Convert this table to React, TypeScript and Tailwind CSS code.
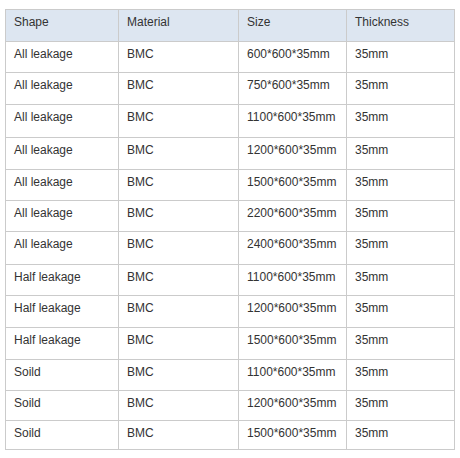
const header = ["Shape", "Material", "Size", "Thickness"]

const rows: { shape: string; size: string; h: string }[] = [
  { shape: "All leakage", size: "600*600*35mm", h: "h-[31px]" },
  { shape: "All leakage", size: "750*600*35mm", h: "h-[32px]" },
  { shape: "All leakage", size: "1100*600*35mm", h: "h-[33px]" },
  { shape: "All leakage", size: "1200*600*35mm", h: "h-[32px]" },
  { shape: "All leakage", size: "1500*600*35mm", h: "h-[31px]" },
  { shape: "All leakage", size: "2200*600*35mm", h: "h-[31px]" },
  { shape: "All leakage", size: "2400*600*35mm", h: "h-[33px]" },
  { shape: "Half leakage", size: "1100*600*35mm", h: "h-[31px]" },
  { shape: "Half leakage", size: "1200*600*35mm", h: "h-[32px]" },
  { shape: "Half leakage", size: "1500*600*35mm", h: "h-[32px]" },
  { shape: "Soild", size: "1100*600*35mm", h: "h-[31px]" },
  { shape: "Soild", size: "1200*600*35mm", h: "h-[30px]" },
  { shape: "Soild", size: "1500*600*35mm", h: "h-[29px]" },
]

const cell = "border-r border-b border-[#cbcbcb] pl-[8px] pt-[3px] leading-[18px] whitespace-nowrap"

export default function App() {
  return (
    <div className="w-[460px] h-[458px] bg-white pl-[5px] pt-[9px] text-[12px] text-[#333333] font-['Liberation_Sans',Arial,sans-serif]">
      <div className="w-[450px] grid grid-cols-[113px_120px_108px_108px] border-l border-t border-[#cbcbcb]">
        {header.map((h) => (
          <div key={h} className={`${cell} h-[32px] bg-[#dde6f1]`}>
            {h}
          </div>
        ))}
        {rows.map((r, i) => (
          <div key={i} className="contents">
            <div className={`${cell} ${r.h}`}>{r.shape}</div>
            <div className={`${cell} ${r.h}`}>BMC</div>
            <div className={`${cell} ${r.h}`}>{r.size}</div>
            <div className={`${cell} ${r.h}`}>35mm</div>
          </div>
        ))}
      </div>
    </div>
  )
}
